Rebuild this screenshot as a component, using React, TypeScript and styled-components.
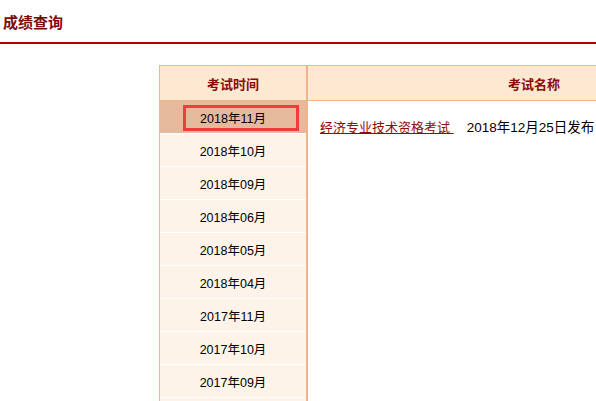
import React from "react";
import styled, { createGlobalStyle } from "styled-components";

const Global = createGlobalStyle`
  html, body { margin: 0; padding: 0; background: #ffffff; }
  body {
    font-family: "Liberation Sans", "Noto Sans CJK SC", sans-serif;
    overflow: hidden;
    width: 596px;
    height: 401px;
  }
`;

const Page = styled.div`
  width: 596px;
  height: 401px;
  overflow: hidden;
`;

const TitleBar = styled.div`
  height: 42px;
  border-bottom: 2px solid #b30000;
  display: flex;
  align-items: center;
  padding-left: 3px;
`;

const Title = styled.h1`
  margin: 0;
  font-size: 15px;
  font-weight: bold;
  color: #7d0a0a;
  font-family: "Noto Sans CJK SC", sans-serif;
  line-height: 20px;
  padding-top: 2px;
`;

const TableWrap = styled.div`
  margin: 21px 0 0 159px;
  width: 600px;
  border-left: 1px solid #f0b48c;
  border-top: 1px solid #f0b48c;
`;

const HeadRow = styled.div`
  display: grid;
  grid-template-columns: 148px 1fr;
  height: 34px;
  background: #fde9d2;
  border-bottom: 1px solid #f0b48c;
`;

const HeadCell = styled.div<{ $divider?: boolean }>`
  display: flex;
  align-items: center;
  justify-content: center;
  font-size: 13px;
  font-weight: bold;
  color: #8b0a0a;
  font-family: "Noto Sans CJK SC", sans-serif;
  border-right: ${(p) => (p.$divider ? "2px solid #f0b48c" : "none")};
  padding-top: 1px;
`;

const Body = styled.div`
  display: grid;
  grid-template-columns: 148px 1fr;
`;

const DateList = styled.ul`
  list-style: none;
  margin: 0;
  padding: 0;
  border-right: 2px solid #f0b48c;
`;

const DateItem = styled.li<{ $active?: boolean }>`
  position: relative;
  height: 32px;
  border-bottom: 1px solid #ffffff;
  background: ${(p) => (p.$active ? "#e4b99c" : "#fdf3e8")};
  display: flex;
  align-items: center;
  justify-content: center;
  font-size: 12.5px;
  color: #000000;
  cursor: pointer;
`;

const Highlight = styled.span`
  position: absolute;
  left: 23px;
  top: 4px;
  width: 116px;
  height: 26px;
  box-sizing: border-box;
  border: 3px solid #f23b3b;
  pointer-events: none;
`;

const Content = styled.div`
  background: #ffffff;
  padding: 17px 10px 0 12px;
  font-size: 13px;
  line-height: 20px;
  white-space: nowrap;
`;

const ExamLink = styled.a`
  color: #8f0a0a;
  text-decoration: underline;
  cursor: pointer;
`;

const Published = styled.span`
  margin-left: 13px;
  color: #000000;
  font-size: 13.5px;
`;

const dates = [
  "2018年11月",
  "2018年10月",
  "2018年09月",
  "2018年06月",
  "2018年05月",
  "2018年04月",
  "2017年11月",
  "2017年10月",
  "2017年09月",
];

export default function App() {
  return (
    <>
      <Global />
      <Page>
        <TitleBar>
          <Title>成绩查询</Title>
        </TitleBar>
        <TableWrap>
          <HeadRow>
            <HeadCell $divider>考试时间</HeadCell>
            <HeadCell>考试名称</HeadCell>
          </HeadRow>
          <Body>
            <DateList>
              {dates.map((d, i) => (
                <DateItem key={d} $active={i === 0}>
                  {d}
                  {i === 0 && <Highlight />}
                </DateItem>
              ))}
              <DateItem />
            </DateList>
            <Content>
              <ExamLink>经济专业技术资格考试&nbsp;</ExamLink>
              <Published>2018年12月25日发布</Published>
            </Content>
          </Body>
        </TableWrap>
      </Page>
    </>
  );
}
